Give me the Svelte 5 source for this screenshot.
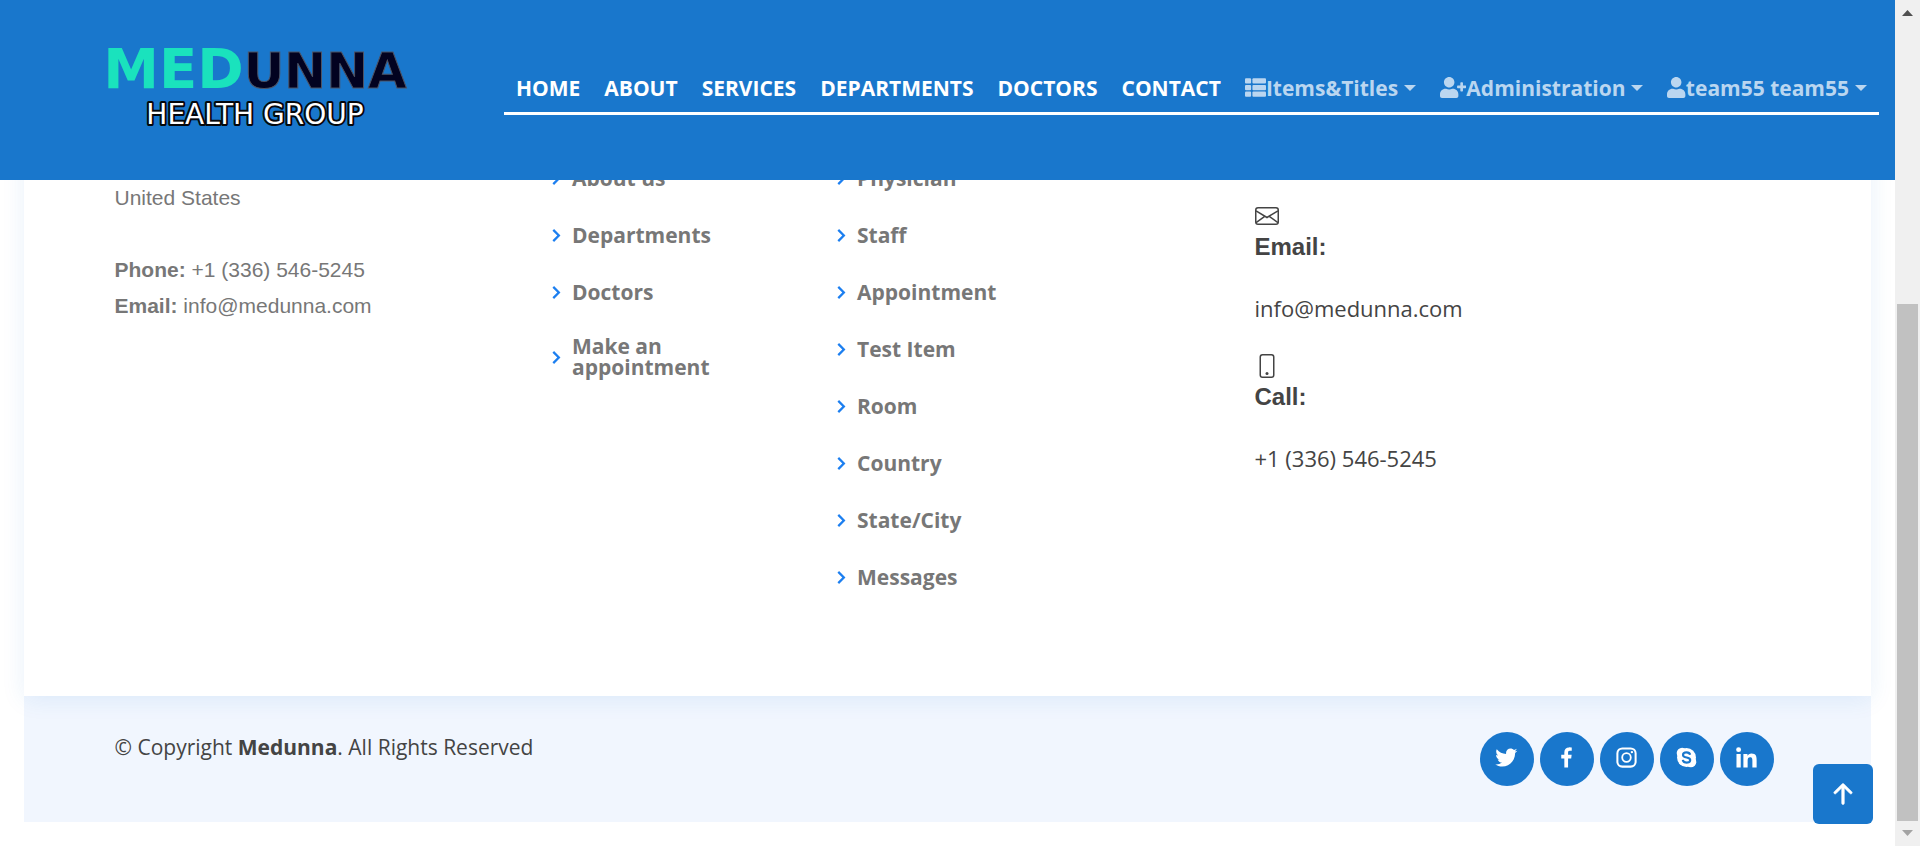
<script>
  const pages = ['HOME', 'ABOUT', 'SERVICES', 'DEPARTMENTS', 'DOCTORS', 'CONTACT'];
  const menus = [
    { label: 'Items&Titles', icon: 'list' },
    { label: 'Administration', icon: 'user-plus' },
    { label: 'team55 team55', icon: 'user' }
  ];
  const usefulLinks = ['About us', 'Departments', 'Doctors', 'Make an appointment'];
  const services = ['Physician', 'Staff', 'Appointment', 'Test Item', 'Room', 'Country', 'State/City', 'Messages'];
  const socials = ['twitter', 'facebook', 'instagram', 'skype', 'linkedin'];
  const userPath =
    'M224 256c70.7 0 128-57.3 128-128S294.7 0 224 0 96 57.3 96 128s57.3 128 128 128zm89.6 32h-16.7c-22.2 10.2-46.9 16-72.9 16s-50.6-5.8-72.9-16h-16.7C60.2 288 0 348.2 0 422.4V464c0 26.5 21.5 48 48 48h352c26.5 0 48-21.5 48-48v-41.6c0-74.2-60.2-134.4-134.4-134.4z';
</script>

{#snippet linkList(items)}
  <ul class="links">
    {#each items as item}
      <li>
        <svg class="chevron" viewBox="0 0 24 24" aria-hidden="true">
          <path d="M10.707 17.707 16.414 12l-5.707-5.707-1.414 1.414L13.586 12l-4.293 4.293z" />
        </svg>
        <a href="#top">{item}</a>
      </li>
    {/each}
  </ul>
{/snippet}

<header class="header">
  <a class="brand" href="#top">
    <svg class="logo" viewBox="0 0 430 110">
      <text class="logo-name" x="215" y="68" text-anchor="middle"><tspan class="med">MED</tspan><tspan class="unna">UNNA</tspan></text>
      <text class="logo-group" x="215" y="104" text-anchor="middle">HEALTH GROUP</text>
    </svg>
  </a>
  <nav class="nav">
    {#each pages as page}
      <a class="nav-item" href="#top">{page}</a>
    {/each}
    {#each menus as menu}
      <button class="nav-item menu" type="button">
        {#if menu.icon === 'list'}
          <svg class="menu-icon" viewBox="0 0 512 512" aria-hidden="true">
            <rect x="0" y="32" width="149" height="128" rx="24" />
            <rect x="0" y="192" width="149" height="128" rx="24" />
            <rect x="0" y="352" width="149" height="128" rx="24" />
            <rect x="181" y="32" width="331" height="128" rx="24" />
            <rect x="181" y="192" width="331" height="128" rx="24" />
            <rect x="181" y="352" width="331" height="128" rx="24" />
          </svg>
        {:else if menu.icon === 'user-plus'}
          <svg class="menu-icon" viewBox="0 0 640 512" aria-hidden="true">
            <path d={userPath} />
            <path d="M624 208h-64v-64c0-8.8-7.2-16-16-16h-32c-8.8 0-16 7.2-16 16v64h-64c-8.8 0-16 7.2-16 16v32c0 8.8 7.2 16 16 16h64v64c0 8.8 7.2 16 16 16h32c8.8 0 16-7.2 16-16v-64h64c8.8 0 16-7.2 16-16v-32c0-8.8-7.2-16-16-16z" />
          </svg>
        {:else}
          <svg class="menu-icon" viewBox="0 0 448 512" aria-hidden="true"><path d={userPath} /></svg>
        {/if}
        <span>{menu.label}</span>
        <span class="caret"></span>
      </button>
    {/each}
  </nav>
</header>

<footer class="footer">
  <section class="footer-top">
    <div class="container columns">
      <address class="address">
        <p>United States</p>
        <p class="phone"><strong>Phone:</strong> +1 (336) 546-5245</p>
        <p><strong>Email:</strong> info@medunna.com</p>
      </address>
      {@render linkList(usefulLinks)}
      {@render linkList(services)}
      <div class="contact">
        <div class="contact-item">
          <svg class="contact-icon" viewBox="0 0 16 16" aria-hidden="true">
            <rect x=".5" y="2.5" width="15" height="11" rx="1.5" />
            <path d="M.7 4.600 8 9l7.300-4.400M.7 12.400l5.800-4.200M15.300 12.400 9.500 8.200" />
          </svg>
          <h4>Email:</h4>
          <p>info@medunna.com</p>
        </div>
        <div class="contact-item">
          <svg class="contact-icon" viewBox="0 0 16 16" aria-hidden="true">
            <rect x="3.5" y=".5" width="9" height="15" rx="1.5" />
            <circle class="dot" cx="8" cy="13" r="1" />
          </svg>
          <h4>Call:</h4>
          <p>+1 (336) 546-5245</p>
        </div>
      </div>
    </div>
  </section>

  <section class="footer-bottom">
    <div class="container bottom-row">
      <p class="copyright">© Copyright <strong>Medunna</strong>. All Rights Reserved</p>
      <div class="socials">
        {#each socials as name}
          <a class="social" href="#top" aria-label={name}>
            <svg viewBox="0 0 24 24" aria-hidden="true">
              {#if name === 'twitter'}
                <path d="M19.633 7.997c.013.175.013.349.013.523 0 5.325-4.053 11.461-11.46 11.461-2.282 0-4.402-.661-6.186-1.809.324.037.636.05.973.05a8.07 8.07 0 0 0 5.001-1.721 4.036 4.036 0 0 1-3.767-2.793c.249.037.499.062.761.062.361 0 .724-.05 1.061-.137a4.027 4.027 0 0 1-3.23-3.953v-.05c.537.299 1.16.486 1.82.511a4.022 4.022 0 0 1-1.796-3.354c0-.748.199-1.434.548-2.032a11.457 11.457 0 0 0 8.306 4.215c-.062-.3-.1-.611-.1-.923a4.026 4.026 0 0 1 4.028-4.028c1.16 0 2.207.486 2.943 1.272a7.957 7.957 0 0 0 2.556-.973 4.02 4.02 0 0 1-1.771 2.22 8.073 8.073 0 0 0 2.319-.624 8.645 8.645 0 0 1-2.019 2.083z" />
              {:else if name === 'facebook'}
                <path d="M13.397 20.997v-8.196h2.765l.411-3.209h-3.176V7.548c0-.926.258-1.56 1.587-1.56h1.684V3.127A22.336 22.336 0 0 0 14.201 3c-2.444 0-4.122 1.492-4.122 4.231v2.355H7.332v3.209h2.753v8.202h3.312z" />
              {:else if name === 'instagram'}
                <path d="M11.999 7.377a4.623 4.623 0 1 0 0 9.248 4.623 4.623 0 0 0 0-9.248zm0 7.627a3.004 3.004 0 1 1 0-6.008 3.004 3.004 0 0 1 0 6.008z" />
                <circle cx="16.806" cy="7.207" r="1.078" />
                <rect class="frame" x="3.9" y="3.9" width="16.2" height="16.2" rx="4.4" />
              {:else if name === 'skype'}
                <circle cx="12" cy="12" r="8.4" />
                <circle cx="8.1" cy="8.1" r="4.800" />
                <circle cx="15.9" cy="15.9" r="4.800" />
                <path class="skype-mark" d="M15.200 9.600c-.3-1.500-1.600-2.100-3.200-2.100-1.900 0-3.100.9-3.100 2.200 0 3.300 6.400 1.400 6.400 4.600 0 1.500-1.300 2.300-3.200 2.300-1.900 0-3.200-.8-3.400-2.400" />
              {:else}
                <circle cx="4.983" cy="5.009" r="2.188" />
                <path d="M9.237 8.855v12.139h3.769v-6.003c0-1.584.298-3.118 2.262-3.118 1.937 0 1.961 1.811 1.961 3.218v5.904H21v-6.657c0-3.27-.704-5.783-4.526-5.783-1.835 0-3.065 1.007-3.568 1.96h-.051v-1.66H9.237zm-6.142 0H6.87v12.139H3.095z" />
              {/if}
            </svg>
          </a>
        {/each}
      </div>
    </div>
  </section>
</footer>

<a class="back-to-top" href="#top" aria-label="Back to top">
  <svg viewBox="0 0 16 16" aria-hidden="true">
    <path d="M8 12a.5.5 0 0 0 .5-.5V5.707l2.146 2.147a.5.5 0 0 0 .708-.708l-3-3a.5.5 0 0 0-.708 0l-3 3a.5.5 0 1 0 .708.708L7.5 5.707V11.5a.5.5 0 0 0 .5.5z" />
  </svg>
</a>

<div class="scrollbar" aria-hidden="true">
  <svg class="scroll-arrow" viewBox="0 0 25 25"><path d="M7 16h11l-5.500-6z" fill="#505050" /></svg>
  <div class="track"><div class="thumb"></div></div>
  <svg class="scroll-arrow" viewBox="0 0 25 25"><path d="M7 9h11l-5.500 6z" fill="#a3a3a3" /></svg>
</div>

<style>
  :global(body) {
    margin: 0;
    background: #fff;
    color: #444;
    font-family: 'Open Sans', sans-serif;
    font-size: 21px;
  }

  a {
    color: inherit;
    text-decoration: none;
  }

  p,
  h4,
  ul {
    margin: 0;
    padding: 0;
  }

  .header {
    position: fixed;
    top: 0;
    left: 0;
    right: 25px;
    z-index: 5;
    box-sizing: border-box;
    height: 180px;
    padding: 0 16px 0 40px;
    display: flex;
    align-items: flex-start;
    justify-content: space-between;
    background: #1977cc;
  }

  .brand {
    padding-top: 20px;
  }

  .logo {
    display: block;
    width: 430px;
    height: 110px;
  }

  .logo-name {
    font-family: 'DejaVu Sans', sans-serif;
    font-weight: 700;
    font-size: 56px;
  }

  .med {
    fill: #1ae2bd;
  }

  .unna {
    fill: #020220;
    stroke: #4d5263;
    stroke-width: 1;
    font-size: 50px;
  }

  .logo-group {
    font-family: 'DejaVu Sans', sans-serif;
    font-size: 28px;
    fill: #fff;
    stroke: #05080c;
    stroke-width: 4;
    stroke-linejoin: round;
    paint-order: stroke;
  }

  .nav {
    display: flex;
    margin-top: 63px;
    border-bottom: 3px solid #fff;
  }

  .nav-item {
    display: flex;
    align-items: center;
    height: 49px;
    padding: 0 12px;
    color: #fff;
    font-weight: 700;
    white-space: nowrap;
  }

  .menu {
    border: 0;
    background: none;
    color: #bad6f0;
    font-family: inherit;
    font-size: 21px;
    cursor: pointer;
  }

  .menu-icon {
    height: 21px;
    fill: currentColor;
  }

  .caret {
    margin-left: 6px;
    border: 6px solid transparent;
    border-top-color: currentColor;
    border-bottom: 0;
  }

  .footer {
    margin: 0 49px 24px 24px;
  }

  .container {
    box-sizing: border-box;
    max-width: 1710px;
    margin: 0 auto;
  }

  .footer-top {
    position: relative;
    z-index: 1;
    padding: 150px 0 90px;
    background: #fff;
    box-shadow: 0 3px 22px rgba(25, 119, 204, 0.1);
  }

  .columns {
    display: grid;
    grid-template-columns: 3fr 2fr 3fr 4fr;
  }

  .columns > * {
    padding: 0 22px;
  }

  .columns > .address {
    padding-top: 30px;
    color: #777;
    font-family: 'Liberation Sans', Arial, sans-serif;
    font-style: normal;
    line-height: 36px;
  }

  .phone {
    margin-top: 36px;
  }

  .links {
    list-style: none;
    color: #777;
    font-weight: 700;
    line-height: 21px;
  }

  .links li {
    box-sizing: border-box;
    min-height: 57px;
    padding: 15px 0;
    display: flex;
    align-items: center;
    gap: 3px;
  }

  .chevron {
    flex: none;
    width: 27px;
    height: 27px;
    fill: #1c7ff0;
  }

  .columns > .contact {
    padding-top: 54px;
    font-size: 22px;
  }

  .contact-item {
    margin-bottom: 28px;
  }

  .contact-item:last-child {
    margin-bottom: 0;
  }

  .contact-icon {
    display: block;
    width: 24px;
    height: 24px;
    margin-bottom: 4px;
    fill: none;
    stroke: #444;
  }

  .dot {
    fill: #444;
    stroke: none;
  }

  h4 {
    margin-bottom: 28px;
    font: 700 24px/30px 'Liberation Sans', Arial, sans-serif;
  }

  .contact-item p {
    line-height: 36px;
  }

  .footer-bottom {
    padding: 36px 0;
    background: #f1f6fe;
  }

  .bottom-row {
    display: flex;
    align-items: flex-start;
    justify-content: space-between;
    padding: 0 29px 0 22px;
  }

  .copyright {
    line-height: 30px;
  }

  .socials {
    display: flex;
    gap: 6px;
  }

  .social {
    box-sizing: border-box;
    width: 54px;
    height: 54px;
    padding-bottom: 3px;
    display: grid;
    place-items: center;
    border-radius: 50%;
    background: #1977cc;
  }

  .social svg {
    width: 27px;
    height: 27px;
    fill: #fff;
  }

  .social .frame {
    fill: none;
    stroke: #fff;
    stroke-width: 1.8;
  }

  .social .skype-mark {
    fill: none;
    stroke: #1977cc;
    stroke-width: 1.9;
  }

  .back-to-top {
    position: fixed;
    right: 47px;
    bottom: 22px;
    z-index: 6;
    width: 60px;
    height: 60px;
    display: grid;
    place-items: center;
    border-radius: 6px;
    background: #1977cc;
  }

  .back-to-top svg {
    width: 42px;
    height: 42px;
    fill: #fff;
    stroke: #fff;
    stroke-width: 0.2;
  }

  .scrollbar {
    position: fixed;
    top: 0;
    right: 0;
    bottom: 0;
    z-index: 7;
    width: 25px;
    display: flex;
    flex-direction: column;
    background: #f0f0f0;
  }

  .scroll-arrow {
    display: block;
    flex: none;
    height: 25px;
  }

  .track {
    flex: 1;
    display: flex;
    flex-direction: column;
    justify-content: flex-end;
    padding: 0 2px;
  }

  .thumb {
    height: 65%;
    background: #c1c1c1;
  }
</style>
